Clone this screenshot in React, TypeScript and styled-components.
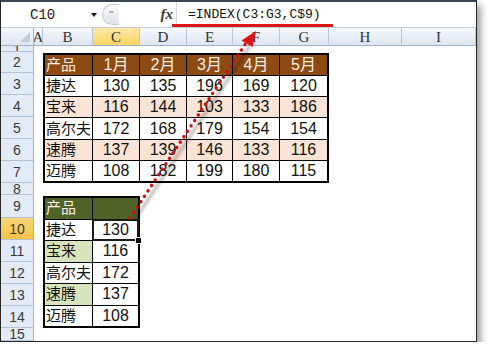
import React from 'react';
import styled, { createGlobalStyle } from 'styled-components';

const GlobalStyle = createGlobalStyle`
  html, body { margin: 0; padding: 0; background: #fff; }
  body { font-family: "Liberation Sans", "Noto Sans CJK SC", sans-serif; }
`;

// column widths: row header, A, B..H, I fills the rest
const COL_LETTERS = ['A', 'B', 'C', 'D', 'E', 'F', 'G', 'H', 'I'];
const ROW_LABELS = ['1', '2', '3', '4', '5', '6', '7', '8', '9', '10', '11', '12', '13', '14', '15'];

const sales = [
  ['捷达', 130, 135, 196, 169, 120],
  ['宝来', 116, 144, 103, 133, 186],
  ['高尔夫', 172, 168, 179, 154, 154],
  ['速腾', 137, 139, 146, 133, 116],
  ['迈腾', 108, 182, 199, 180, 115],
];

const lookup = [
  ['捷达', 130],
  ['宝来', 116],
  ['高尔夫', 172],
  ['速腾', 137],
  ['迈腾', 108],
];

const Frame = styled.div`
  position: relative;
  width: 477px;
  height: 342px;
  box-sizing: border-box;
  border: 1px solid #262626;
  border-top: 2px solid #3a4350;
  box-shadow: 4px 5px 7px rgba(0, 0, 0, 0.38);
  background: #fff;
  display: flex;
  flex-direction: column;
  overflow: visible;
`;

const FormulaBar = styled.div`
  height: 25px;
  display: flex;
  align-items: stretch;
  background: #fff;
  border-bottom: 1px solid #c6cfdb;
`;

const NameBox = styled.div`
  width: 101px;
  display: flex;
  align-items: center;
  padding-left: 29px;
  box-sizing: border-box;
  font-family: "Liberation Mono", monospace;
  font-size: 14px;
  color: #222;
`;

const DropArrow = styled.span`
  margin-left: auto;
  margin-right: 5px;
  width: 0;
  height: 0;
  border-left: 3.5px solid transparent;
  border-right: 3.5px solid transparent;
  border-top: 4px solid #1a1a1a;
`;

const Grip = styled.div`
  width: 17px;
  margin: 2px 0;
  box-sizing: border-box;
  border: 1px solid #c3cad3;
  border-right: none;
  border-radius: 11px 0 0 11px;
  background: linear-gradient(#fafbfc, #dfe4ea);
  display: flex;
  align-items: center;
  justify-content: center;
  &::after {
    content: '';
    width: 5px;
    height: 2px;
    border-radius: 1px;
    background: #aab3bf;
    margin-top: -5px;
  }
`;

const FxBox = styled.div`
  width: 58px;
  display: flex;
  align-items: center;
  justify-content: flex-end;
  padding-right: 3px;
  box-sizing: border-box;
  border-right: 1px solid #d3d9e1;
  font-family: "Liberation Serif", serif;
  font-style: italic;
  font-weight: bold;
  font-size: 15px;
  color: #3a3a3a;
`;

const FormulaText = styled.div`
  flex: 1;
  display: flex;
  align-items: center;
  padding-left: 11px;
  font-family: "Liberation Mono", monospace;
  font-size: 13px;
  color: #111;
`;

const Sheet = styled.div`
  flex: 1;
  min-height: 0;
  display: grid;
  grid-template-columns: 33px 9px 50px 47px 47px 46px 47px 49px 73px 1fr;
  grid-template-rows: 18px 6px 21px repeat(5, 22px) 12px 23px repeat(5, 22px) 1fr;
  overflow: hidden;
`;

const Corner = styled.div`
  grid-column: 1;
  grid-row: 1;
  background: linear-gradient(#f4f7fb, #dde6f1);
  border-right: 1px solid #9fb4cc;
  border-bottom: 1px solid #9fb4cc;
  display: flex;
  align-items: flex-end;
  justify-content: flex-end;
  padding: 0 3px 3px 0;
  box-sizing: border-box;
  &::after {
    content: '';
    width: 0;
    height: 0;
    border-left: 10px solid transparent;
    border-bottom: 10px solid #c3cdd9;
  }
`;

const ColHeader = styled.div<{ $active?: boolean }>`
  grid-row: 1;
  display: flex;
  align-items: center;
  justify-content: center;
  background: ${(p) =>
    p.$active ? 'linear-gradient(#fde9a8, #f8d462)' : 'linear-gradient(#f6f9fc, #dce5f1)'};
  border-right: 1px solid #b7c7da;
  border-bottom: 1px solid #9fb4cc;
  font-family: "Liberation Serif", serif;
  font-size: 15px;
  line-height: 16px;
  color: #333;
  overflow: hidden;
`;

const RowHeader = styled.div<{ $active?: boolean }>`
  grid-column: 1;
  display: flex;
  align-items: center;
  justify-content: center;
  background: ${(p) => (p.$active ? 'linear-gradient(#fbd77a, #f5c244)' : '#e3ebf6')};
  border-right: 1px solid #9fb4cc;
  border-bottom: 1px solid #b3c4d9;
  font-family: "Liberation Sans", sans-serif;
  font-size: 14px;
  color: #3a3a3a;
  overflow: hidden;
  line-height: 14px;
  min-height: 0;
`;

const DataTable = styled.div<{ $cols: string; $col: string; $row: string }>`
  grid-column: ${(p) => p.$col};
  grid-row: ${(p) => p.$row};
  min-height: 0;
  display: grid;
  grid-template-columns: ${(p) => p.$cols};
  grid-auto-rows: minmax(0, 1fr);
  border: 2px solid #000;
  border-right-width: 1px;
  border-bottom-width: 1px;
  margin-top: 1px;
`;

const Cell = styled.div<{ $bg?: string; $center?: boolean; $light?: boolean; $active?: boolean }>`
  position: relative;
  min-height: 0;
  display: flex;
  align-items: center;
  justify-content: ${(p) => (p.$center ? 'center' : 'flex-start')};
  padding-left: ${(p) => (p.$center ? '0' : '1px')};
  background: ${(p) => p.$bg || '#fff'};
  border-right: 1px solid #000;
  border-bottom: 1px solid #000;
  font-size: ${(p) => (p.$center ? '16px' : '15px')};
  line-height: 18px;
  color: ${(p) => (p.$light ? '#fdeee2' : '#111')};
  white-space: nowrap;
  overflow: visible;
  ${(p) =>
    p.$active &&
    `
    &::after {
      content: '';
      position: absolute;
      inset: -1px;
      border: 2px solid #1a1a1a;
      box-shadow: inset 0 0 0 1px #fff;
    }
    &::before {
      content: '';
      position: absolute;
      right: -4px;
      bottom: -4px;
      width: 5px;
      height: 5px;
      background: #000;
      border: 1px solid #fff;
      z-index: 2;
    }
  `}
`;

const Overlay = styled.svg`
  position: absolute;
  left: -1px;
  top: -2px;
  width: 477px;
  height: 342px;
  pointer-events: none;
  overflow: visible;
`;

const App: React.FC = () => {
  return (
    <>
      <GlobalStyle />
      <Frame>
        <FormulaBar>
          <NameBox>
            C10
            <DropArrow />
          </NameBox>
          <Grip />
          <FxBox>fx</FxBox>
          <FormulaText>=INDEX(C3:G3,C$9)</FormulaText>
        </FormulaBar>

        <Sheet>
          <Corner />
          {COL_LETTERS.map((c, i) => (
            <ColHeader key={c} $active={c === 'C'} style={{ gridColumn: i + 2 }}>
              {c}
            </ColHeader>
          ))}
          {ROW_LABELS.map((r, i) => (
            <RowHeader key={r} $active={r === '10'} style={{ gridRow: i + 2 }}>
              {r}
            </RowHeader>
          ))}

          <DataTable $cols="48px 47px 47px 46px 47px 1fr" $col="3 / 9" $row="3 / 9">
            {['产品', '1月', '2月', '3月', '4月', '5月'].map((h, i) => (
              <Cell key={h} $bg="#8d4a12" $light $center={i > 0}>
                {h}
              </Cell>
            ))}
            {sales.map((row, ri) =>
              row.map((v, ci) => (
                <Cell key={`${ri}-${ci}`} $center={ci > 0} $bg={ri % 2 === 1 ? '#fbe4d5' : '#fff'}>
                  {v}
                </Cell>
              ))
            )}
          </DataTable>

          <DataTable $cols="48px 1fr" $col="3 / 5" $row="10 / 16">
            <Cell $bg="#4f6228" $light>
              产品
            </Cell>
            <Cell $bg="#4f6228" />
            {lookup.map(([name, v], ri) => (
              <React.Fragment key={name}>
                <Cell $bg={ri % 2 === 1 ? '#d8e4bc' : '#fff'}>{name}</Cell>
                <Cell $center $active={ri === 0}>
                  {v}
                </Cell>
              </React.Fragment>
            ))}
          </DataTable>
        </Sheet>

        <Overlay viewBox="0 0 477 342">
          <defs>
            <filter id="soft" x="-20%" y="-20%" width="140%" height="140%">
              <feGaussianBlur stdDeviation="1.4" />
            </filter>
          </defs>
          {/* underline under the formula */}
          <line x1="174" y1="28" x2="335" y2="28" stroke="rgba(0,0,0,0.3)" strokeWidth="3" filter="url(#soft)" />
          <line x1="172" y1="25.5" x2="333" y2="25.5" stroke="#dd1414" strokeWidth="3" />
          {/* dotted arrow from C9 up to the formula */}
          <line x1="134" y1="221" x2="250" y2="46" stroke="rgba(0,0,0,0.28)" strokeWidth="3" filter="url(#soft)" />
          <line
            x1="130"
            y1="218"
            x2="246"
            y2="43"
            stroke="#d10d0d"
            strokeWidth="3.4"
            strokeLinecap="round"
            strokeDasharray="0.1 6.4"
          />
          <polygon points="256,31 252.5,47 241.5,40.5" fill="#e01414" />
        </Overlay>
      </Frame>
    </>
  );
};

export default App;
